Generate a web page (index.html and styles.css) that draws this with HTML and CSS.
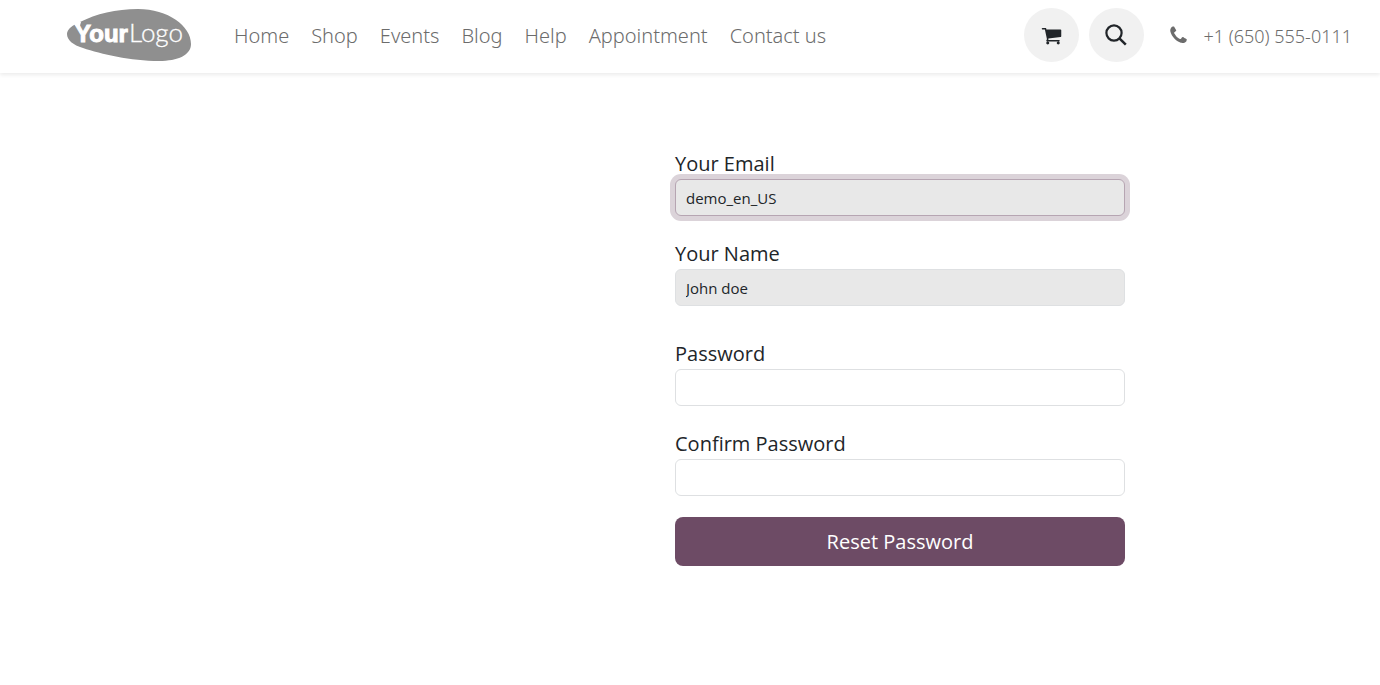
FILE: index.html
```html
<!DOCTYPE html>
<html lang="en">
<head>
<meta charset="utf-8">
<meta name="viewport" content="width=device-width, initial-scale=1">
<title>Reset Password</title>
<link rel="stylesheet" href="styles.css">
</head>
<body>
<header class="site-header">
  <a class="brand" href="#" aria-label="Your Logo">
    <svg class="brand-logo" width="126" height="54" viewBox="0 0 126 54" role="img" aria-label="Your Logo">
      <path class="logo-shape" d="M1 26C1 21 7 17 14 14C30 6 50 1 72 1C102 1 125 18 125 36C125 47 112 53 93 53C65 53 35 46 17 40C7 37 1 32 1 26Z"/>
      <path class="logo-notch" d="M5 14L15 14L13 21L9 17Z"/>
      <text class="logo-bold" x="9" y="34">Your</text>
      <text class="logo-light" x="63" y="34">Logo</text>
    </svg>
  </a>
  <nav class="main-nav">
    <a href="#">Home</a>
    <a href="#">Shop</a>
    <a href="#">Events</a>
    <a href="#">Blog</a>
    <a href="#">Help</a>
    <a href="#">Appointment</a>
    <a href="#">Contact us</a>
  </nav>
  <div class="header-tools">
    <a class="round-button" href="#" aria-label="Cart">
      <svg width="21" height="21" viewBox="0 0 1792 1792"><path fill="currentColor" d="M704 1536q0 52-38 90t-90 38-90-38-38-90 38-90 90-38 90 38 38 90zm896 0q0 52-38 90t-90 38-90-38-38-90 38-90 90-38 90 38 38 90zm128-1088v512q0 24-16.5 42.5t-40.5 21.5l-1044 122q13 60 13 70 0 16-24 64h920q26 0 45 19t19 45-19 45-45 19h-1024q-26 0-45-19t-19-45q0-11 8-31.5t16-36 21.5-40 15.5-29.5l-177-823h-204q-26 0-45-19t-19-45 19-45 45-19h256q16 0 28.5 6.5t19.5 15.5 13 24.5 8 26 5.5 29.5 4.5 26h1201q26 0 45 19t19 45z"/></svg>
    </a>
    <button class="round-button" type="button" aria-label="Search">
      <svg width="22" height="22" viewBox="0 0 22 22" fill="none" stroke="currentColor"><circle cx="9" cy="9" r="7.600" stroke-width="2.200"/><path d="M14.400 14.400L20.800 20.600" stroke-width="2.500"/></svg>
    </button>
    <a class="phone" href="tel:+16505550111">
      <svg width="21" height="21" viewBox="0 0 1792 1792"><path fill="currentColor" d="M1600 1240q0 27-10 70.500t-21 68.500q-21 50-122 106-94 51-186 51-27 0-53-3.500t-57.500-12.500-47-14.500-55.500-20.500-49-18q-98-35-175-83-127-79-264-216t-216-264q-48-77-83-175-3-9-18-49t-20.500-55.500-14.500-47-12.500-57.500-3.500-53q0-92 51-186 56-101 106-122 25-11 68.500-21t70.500-10q14 0 21 3 18 6 53 76 11 19 30 54t35 63.500 31 53.500q3 4 17.500 25t21.500 35.500 7 28.500q0 20-28.500 50t-62 55-62 53-28.500 46q0 9 5 22.500t8.500 20.500 14 24 11.500 19q76 137 174 235t235 174q2 1 19 11.500t24 14 20.500 8.500 22.500 5q18 0 46-28.500t53-62 55-62 50-28.500q14 0 28.500 7t35.500 21.500 25 17.500q25 15 53.500 31t63.500 35 54 30q70 35 76 53 3 7 3 21z"/></svg>
      <span class="phone-number">+1 (650) 555-0111</span>
    </a>
  </div>
</header>
<main class="page">
  <form class="reset-form">
    <div class="field">
      <label for="email">Your Email</label>
      <input class="is-active" id="email" type="text" value="demo_en_US" readonly>
    </div>
    <div class="field field-name">
      <label for="name">Your Name</label>
      <input id="name" type="text" value="John doe" readonly>
    </div>
    <div class="field">
      <label for="password">Password</label>
      <input id="password" type="password">
    </div>
    <div class="field">
      <label for="confirm">Confirm Password</label>
      <input id="confirm" type="password">
    </div>
    <button class="submit" type="submit">Reset Password</button>
  </form>
</main>
</body>
</html>
```
FILE: styles.css
```css
* {
  box-sizing: border-box;
}

body {
  margin: 0;
  background: #fff;
  color: #212529;
  font-family: "Open Sans", "Noto Sans", sans-serif;
}

.site-header {
  display: flex;
  align-items: center;
  padding: 8px 28px 11px 66px;
  box-shadow: 0 2px 4px rgba(0, 0, 0, 0.08);
  font-family: "Noto Sans", "Open Sans", sans-serif;
  font-weight: 300;
}

.brand,
.brand-logo {
  display: block;
}

.logo-shape {
  fill: #8f8f8f;
}

.logo-notch,
.logo-bold,
.logo-light {
  fill: #fff;
}

.logo-bold {
  font: 700 24px "Liberation Sans", sans-serif;
  stroke: #fff;
  stroke-width: 1px;
}

.logo-light {
  font: 300 26px Lato, sans-serif;
  stroke: #fff;
  stroke-width: 0.3px;
}

.main-nav {
  display: flex;
  gap: 22px;
  margin-left: 42px;
  padding-top: 2px;
}

.main-nav a {
  color: #6c6c6c;
  font-size: 20px;
  line-height: 30px;
  text-decoration: none;
  white-space: nowrap;
}

.header-tools {
  display: flex;
  align-items: center;
  gap: 10px;
  margin-left: auto;
}

.round-button {
  display: flex;
  align-items: center;
  justify-content: center;
  width: 55px;
  height: 54px;
  padding: 0;
  border: 0;
  border-radius: 50%;
  background: #f1f1f1;
  color: #212529;
}

.phone {
  display: flex;
  align-items: center;
  gap: 15px;
  margin-left: 14px;
  color: #6c6c6c;
  font-size: 18px;
  text-decoration: none;
  white-space: nowrap;
}

.phone-number {
  padding-top: 2px;
}

.page {
  padding: 76px 0 80px 420px;
}

.reset-form {
  width: 100%;
  max-width: 450px;
  margin: 0 auto;
}

.field {
  margin-bottom: 23px;
}

.field-name {
  margin-bottom: 33px;
}

.field:last-of-type {
  margin-bottom: 21px;
}

.field label {
  display: block;
  font-size: 20px;
  line-height: 30px;
}

.field input {
  display: block;
  width: 100%;
  height: 37px;
  padding: 0 10px;
  border: 1px solid #dee0e2;
  border-radius: 6px;
  outline: 0;
  background: #fff;
  color: #212529;
  font-family: inherit;
  font-size: 15px;
}

.field input:read-only {
  background: #e8e8e8;
}

.field input.is-active,
.field input:focus {
  border-color: #b6a5b2;
  box-shadow: 0 0 0 5px #dbd3d9;
}

.submit {
  width: 100%;
  height: 49px;
  border: 0;
  border-radius: 8px;
  background: #6d4b65;
  color: #fff;
  font-family: inherit;
  font-size: 20px;
}
```
